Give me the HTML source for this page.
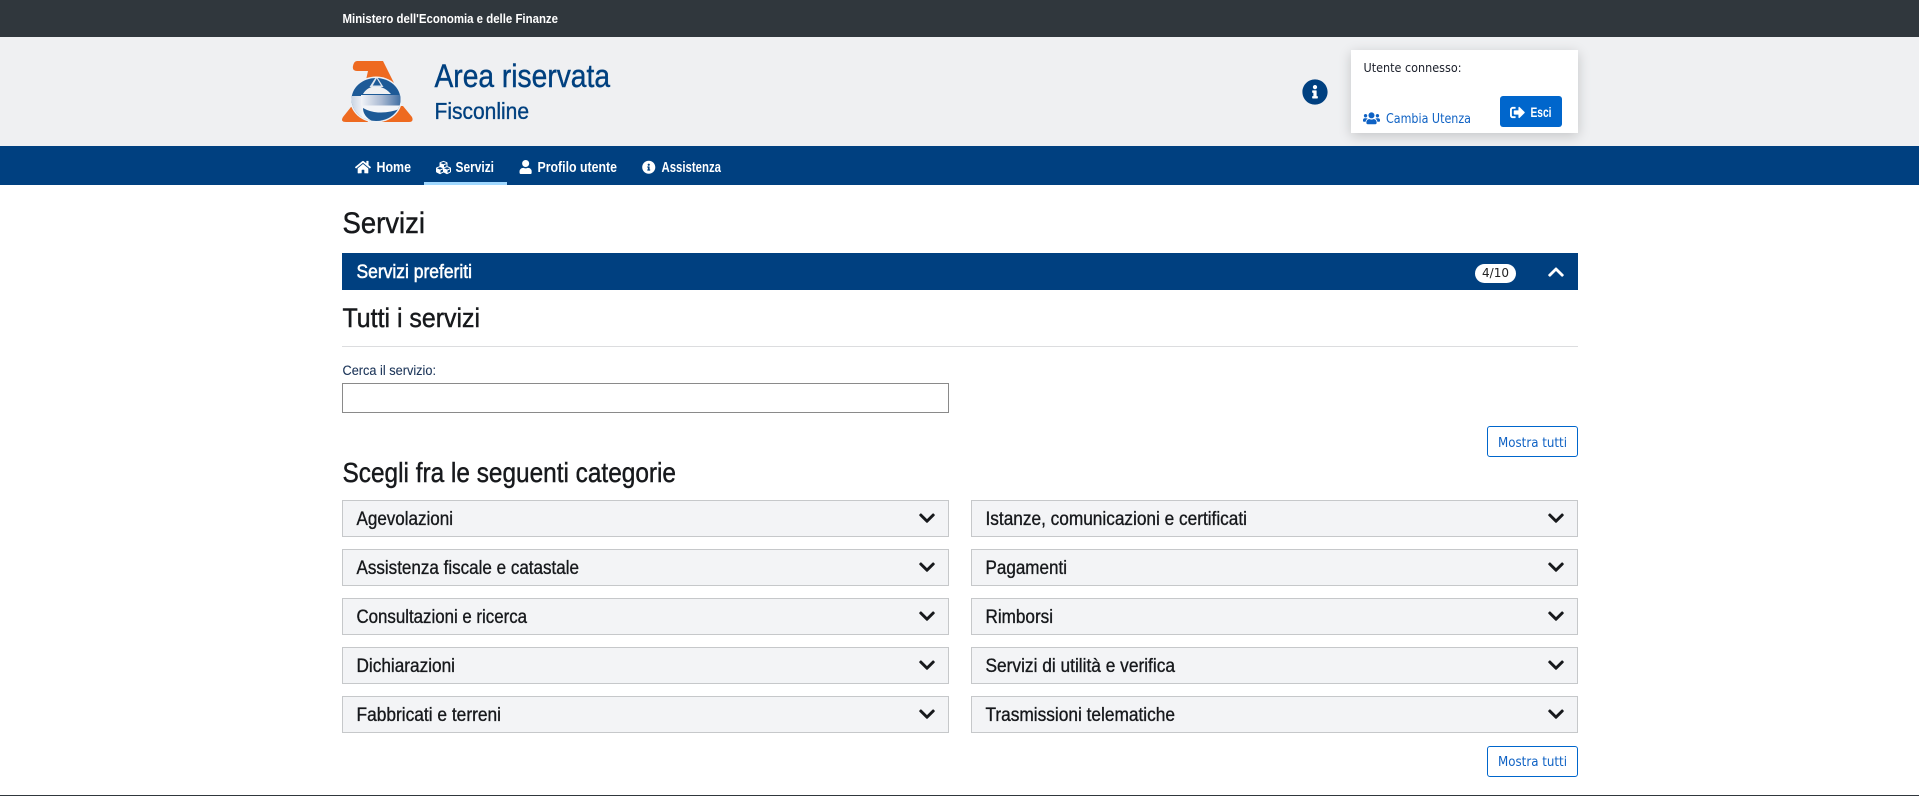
<!DOCTYPE html>
<html lang="it">
<head>
<meta charset="utf-8">
<title>Area riservata - Fisconline</title>
<style>
html,body{margin:0;padding:0;width:1919px;height:796px;overflow:hidden;background:#fff;font-family:"Liberation Sans",sans-serif}
.b{position:absolute;box-sizing:border-box}
.row{height:37px;width:607px;background:#f3f4f6;border:1px solid #c6c8ca}
.btn{left:1487px;width:91px;height:31px;border:1px solid #0066cc;border-radius:3px;background:#fff}
svg#t{position:absolute;left:0;top:0}
text{font-family:"Liberation Sans",sans-serif}
.d{font-family:"DejaVu Sans",sans-serif}
.r{font-size:19px;fill:#17191c;stroke:#17191c;stroke-width:.35}
.h{fill:#17191c;stroke:#17191c;stroke-width:.45}
.n{font-size:14.5px;font-weight:bold;fill:#fff}
.m{font-size:13px;fill:#0f62c4}
</style>
</head>
<body>
<div class="b" style="left:0;top:0;width:1919px;height:37px;background:#30373d"></div>
<div class="b" style="left:0;top:37px;width:1919px;height:109px;background:#eff0f2"></div>
<div class="b" style="left:0;top:146px;width:1919px;height:39px;background:#004080"></div>
<div class="b" style="left:424px;top:182px;width:83px;height:3px;background:#a0d8ff"></div>
<div class="b" style="left:1351px;top:50px;width:227px;height:83px;background:#fff;box-shadow:0 3px 12px rgba(0,0,0,.18)"></div>
<div class="b" style="left:1500px;top:96px;width:62px;height:31px;background:#0066cc;border-radius:3px"></div>
<div class="b" style="left:342px;top:253px;width:1236px;height:37px;background:#004080"></div>
<div class="b" style="left:1475px;top:264px;width:41px;height:19px;background:#fff;border-radius:10px"></div>
<div class="b" style="left:342px;top:346px;width:1236px;height:1px;background:#dcdddf"></div>
<div class="b" style="left:342px;top:383px;width:607px;height:30px;border:1px solid #8a8a8a;background:#fff"></div>
<div class="b btn" style="top:426px"></div>
<div class="b row" style="left:342px;top:500px"></div>
<div class="b row" style="left:342px;top:549px"></div>
<div class="b row" style="left:342px;top:598px"></div>
<div class="b row" style="left:342px;top:647px"></div>
<div class="b row" style="left:342px;top:696px"></div>
<div class="b row" style="left:971px;top:500px"></div>
<div class="b row" style="left:971px;top:549px"></div>
<div class="b row" style="left:971px;top:598px"></div>
<div class="b row" style="left:971px;top:647px"></div>
<div class="b row" style="left:971px;top:696px"></div>
<div class="b btn" style="top:746px"></div>
<div class="b" style="left:0;top:795px;width:1919px;height:1px;background:#30373d"></div>

<svg id="t" width="1919" height="796" viewBox="0 0 1919 796" xmlns="http://www.w3.org/2000/svg">
<defs>
<linearGradient id="eg" x1="0" x2="1" y1="0" y2="0"><stop offset="0" stop-color="#f2f4f8"/><stop offset=".5" stop-color="#a9b9d2"/><stop offset="1" stop-color="#3a6aa0"/></linearGradient>
<linearGradient id="lg" x1="0" x2="1" y1="0" y2="0"><stop offset="0" stop-color="#c4d0e0"/><stop offset="1" stop-color="#f6f7fa"/></linearGradient>
<symbol id="chev" viewBox="0 0 448 512"><path d="M207.029 381.476L12.686 187.132c-9.373-9.373-9.373-24.569 0-33.941l22.667-22.667c9.357-9.357 24.522-9.375 33.901-.04L224 284.505l154.745-154.021c9.379-9.335 24.544-9.317 33.901.04l22.667 22.667c9.373 9.373 9.373 24.569 0 33.941L240.971 381.476c-9.373 9.372-24.569 9.372-33.942 0z"/></symbol>
<symbol id="home" viewBox="0 0 576 512"><path d="M280.37 148.26L96 300.11V464a16 16 0 0 0 16 16l112.06-.29a16 16 0 0 0 15.92-16V368a16 16 0 0 1 16-16h64a16 16 0 0 1 16 16v95.64a16 16 0 0 0 16 16.05L464 480a16 16 0 0 0 16-16V300L295.67 148.26a12.19 12.19 0 0 0-15.3 0zM571.6 251.47L488 182.56V44.05a12 12 0 0 0-12-12h-56a12 12 0 0 0-12 12v72.61L318.47 43a48 48 0 0 0-61 0L4.34 251.47a12 12 0 0 0-1.6 16.9l25.5 31A12 12 0 0 0 45.15 301l235.22-193.74a12.19 12.19 0 0 1 15.3 0L530.9 301a12 12 0 0 0 16.9-1.6l25.5-31a12 12 0 0 0-1.7-16.93z"/></symbol>
<symbol id="cubes" viewBox="0 0 512 512"><path d="M488.6 250.2L392 214V105.5c0-15-9.3-28.4-23.4-33.7l-100-37.5c-8.1-3.1-17.1-3.1-25.3 0l-100 37.5c-14.1 5.3-23.4 18.7-23.4 33.7V214l-96.6 36.2C9.3 255.5 0 268.9 0 283.9V394c0 13.6 7.7 26.1 19.9 32.2l100 50c10.1 5.1 22.1 5.1 32.2 0l103.9-52 103.9 52c10.1 5.1 22.1 5.1 32.2 0l100-50c12.2-6.1 19.9-18.6 19.9-32.2V283.9c0-15-9.3-28.4-23.4-33.7zM358 214.8l-85 31.9v-68.2l85-37v73.3zM154 104.1l102-38.2 102 38.2v.6l-102 41.4-102-41.4v-.6zm84 291.1l-85 42.5v-79.1l85-38.8v75.4zm0-112l-102 41.4-102-41.4v-.6l102-38.2 102 38.2v.6zm240 112l-85 42.5v-79.1l85-38.8v75.4zm0-112l-102 41.4-102-41.4v-.6l102-38.2 102 38.2v.6z"/></symbol>
<symbol id="user" viewBox="0 0 448 512"><path d="M224 256c70.7 0 128-57.3 128-128S294.7 0 224 0 96 57.3 96 128s57.3 128 128 128zm89.6 32h-16.7c-22.2 10.2-46.9 16-72.9 16s-50.6-5.8-72.9-16h-16.7C60.2 288 0 348.2 0 422.4V464c0 26.5 21.5 48 48 48h352c26.5 0 48-21.5 48-48v-41.6c0-74.2-60.2-134.4-134.4-134.4z"/></symbol>
<symbol id="info" viewBox="0 0 512 512"><path d="M256 8C119.043 8 8 119.083 8 256c0 136.997 111.043 248 248 248s248-111.003 248-248C504 119.083 392.957 8 256 8zm0 110c23.196 0 42 18.804 42 42s-18.804 42-42 42-42-18.804-42-42 18.804-42 42-42zm56 254c0 6.627-5.373 12-12 12h-88c-6.627 0-12-5.373-12-12v-24c0-6.627 5.373-12 12-12h12v-64h-12c-6.627 0-12-5.373-12-12v-24c0-6.627 5.373-12 12-12h64c6.627 0 12 5.373 12 12v100h12c6.627 0 12 5.373 12 12v24z"/></symbol>
<symbol id="users" viewBox="0 0 640 512"><path d="M96 224c35.3 0 64-28.7 64-64s-28.7-64-64-64-64 28.7-64 64 28.7 64 64 64zm448 0c35.3 0 64-28.7 64-64s-28.7-64-64-64-64 28.7-64 64 28.7 64 64 64zm32 32h-64c-17.6 0-33.5 7.1-45.1 18.6 40.3 22.1 68.9 62 75.1 109.4h66c17.7 0 32-14.3 32-32v-32c0-35.3-28.7-64-64-64zm-256 0c61.9 0 112-50.1 112-112S381.9 32 320 32 208 82.1 208 144s50.1 112 112 112zm76.8 32h-8.3c-20.8 10-43.9 16-68.5 16s-47.6-6-68.5-16h-8.3C179.6 288 128 339.6 128 403.2V432c0 26.5 21.5 48 48 48h288c26.5 0 48-21.5 48-48v-28.8c0-63.6-51.6-115.2-115.2-115.2zm-223.7-13.4C161.5 263.1 145.6 256 128 256H64c-35.3 0-64 28.7-64 64v32c0 17.7 14.3 32 32 32h65.9c6.3-47.4 34.9-87.3 75.2-109.4z"/></symbol>
<symbol id="out" viewBox="0 0 512 512"><path d="M497 273L329 441c-15 15-41 4.5-41-17v-96H152c-13.3 0-24-10.7-24-24v-96c0-13.3 10.7-24 24-24h136V88c0-21.4 25.9-32 41-17l168 168c9.3 9.4 9.3 24.6 0 34zM192 436v-40c0-6.6-5.4-12-12-12H96c-17.7 0-32-14.3-32-32V160c0-17.7 14.3-32 32-32h84c6.6 0 12-5.4 12-12V76c0-6.6-5.4-12-12-12H96c-53 0-96 43-96 96v192c0 53 43 96 96 96h84c6.6 0 12-5.4 12-12z"/></symbol>
<clipPath id="c"><ellipse cx="376" cy="99.5" rx="24.5" ry="21.5"/></clipPath>
</defs>

<text x="342.5" y="23" font-size="12.5" font-weight="bold" fill="#fff" textLength="215.5" lengthAdjust="spacingAndGlyphs">Ministero dell'Economia e delle Finanze</text>

<!-- logo -->
<g fill="#ee6a20">
<path d="M357 61H383L394 83L366 80L368 71H357Q352 71 353 66Q354 61 357 61Z"/>
<path d="M351 107H362L368 122H346Q340 122 343 117Z"/>
<path d="M391 106H403L412 117Q414 122 409 122H380Z"/>
</g>
<ellipse cx="376" cy="99.5" rx="26" ry="23" fill="#eef1f5"/>
<g clip-path="url(#c)">
<rect x="350" y="76" width="52" height="46" fill="#1d5a97"/>
<rect x="350" y="96" width="14" height="28" fill="url(#lg)"/>
<rect x="362" y="105" width="40" height="18" fill="#f2f4f8"/>
<path fill="#eff0f2" d="M363 94Q367 87 376 86Q385 87 391 94Z"/>
<path fill="#dfe6ef" d="M376.5 76L369.5 87H383.5Z"/>
<path fill="#1d5a97" d="M376.7 78.5L372.8 85.5H381Z"/>
<rect x="361" y="95" width="41" height="10.5" fill="url(#eg)"/>
<path fill="#1d5a97" d="M363 108Q370 112 378 112.5Q390 113 402 108V118Q385 124 372 121Q363 116 363 108Z"/>
</g>

<text x="434.5" y="87" font-size="32" fill="#00407f" stroke="#00407f" stroke-width=".4" textLength="175.5" lengthAdjust="spacingAndGlyphs">Area riservata</text>
<text x="434.5" y="119" font-size="23" fill="#00407f" stroke="#00407f" stroke-width=".35" textLength="94.5" lengthAdjust="spacingAndGlyphs">Fisconline</text>

<circle cx="1315" cy="92" r="9" fill="#fff"/>
<use href="#info" x="1302" y="79" width="26" height="26" fill="#004080"/>

<text class="d" x="1363.5" y="72" font-size="12.5" fill="#1b1f2a" textLength="98" lengthAdjust="spacingAndGlyphs">Utente connesso:</text>
<use href="#users" x="1363" y="111.5" width="17" height="13.6" fill="#0f62c4"/>
<text class="d m" x="1386" y="123" textLength="85" lengthAdjust="spacingAndGlyphs">Cambia Utenza</text>
<use href="#out" x="1510" y="105" width="15" height="15" fill="#fff"/>
<text x="1530.5" y="117" font-size="14" font-weight="bold" fill="#fff" textLength="21" lengthAdjust="spacingAndGlyphs">Esci</text>

<use href="#home" x="355" y="160" width="16" height="14.2" fill="#fff"/>
<text class="n" x="376.5" y="172" textLength="34.5" lengthAdjust="spacingAndGlyphs">Home</text>
<use href="#cubes" x="436" y="160" width="15" height="15" fill="#fff"/>
<text class="n" x="455.5" y="172" textLength="38.5" lengthAdjust="spacingAndGlyphs">Servizi</text>
<use href="#user" x="519.5" y="160" width="12.3" height="14" fill="#fff"/>
<text class="n" x="537.5" y="172" textLength="79.5" lengthAdjust="spacingAndGlyphs">Profilo utente</text>
<use href="#info" x="642" y="160.5" width="13.5" height="13.5" fill="#fff"/>
<text class="n" x="661.5" y="172" textLength="59.5" lengthAdjust="spacingAndGlyphs">Assistenza</text>

<text class="h" x="342.5" y="233" font-size="30" textLength="82.5" lengthAdjust="spacingAndGlyphs">Servizi</text>
<text x="356.5" y="278" font-size="19" fill="#fff" stroke="#fff" stroke-width=".5" textLength="115.5" lengthAdjust="spacingAndGlyphs">Servizi preferiti</text>
<text class="d" x="1482" y="277" font-size="12.5" fill="#222" textLength="27" lengthAdjust="spacingAndGlyphs">4/10</text>
<g transform="translate(1548 281.2) scale(1 -1)"><use href="#chev" width="16" height="18.3" fill="#fff"/></g>

<text class="h" x="342.5" y="327" font-size="26.5" textLength="137.5" lengthAdjust="spacingAndGlyphs">Tutti i servizi</text>
<text x="342.5" y="375" font-size="13.5" fill="#1c3559" stroke="#1c3559" stroke-width=".1" textLength="93.5" lengthAdjust="spacingAndGlyphs">Cerca il servizio:</text>
<text class="d m" x="1498" y="447" textLength="69" lengthAdjust="spacingAndGlyphs">Mostra tutti</text>
<text class="h" x="342.5" y="482" font-size="28" textLength="333.5" lengthAdjust="spacingAndGlyphs">Scegli fra le seguenti categorie</text>

<text class="r" x="356.5" y="525" textLength="96.5" lengthAdjust="spacingAndGlyphs">Agevolazioni</text>
<text class="r" x="356.5" y="574" textLength="222.5" lengthAdjust="spacingAndGlyphs">Assistenza fiscale e catastale</text>
<text class="r" x="356.5" y="623" textLength="170.5" lengthAdjust="spacingAndGlyphs">Consultazioni e ricerca</text>
<text class="r" x="356.5" y="672" textLength="98.5" lengthAdjust="spacingAndGlyphs">Dichiarazioni</text>
<text class="r" x="356.5" y="721" textLength="144.5" lengthAdjust="spacingAndGlyphs">Fabbricati e terreni</text>
<text class="r" x="985.5" y="525" textLength="261.5" lengthAdjust="spacingAndGlyphs">Istanze, comunicazioni e certificati</text>
<text class="r" x="985.5" y="574" textLength="81.5" lengthAdjust="spacingAndGlyphs">Pagamenti</text>
<text class="r" x="985.5" y="623" textLength="67.5" lengthAdjust="spacingAndGlyphs">Rimborsi</text>
<text class="r" x="985.5" y="672" textLength="189.5" lengthAdjust="spacingAndGlyphs">Servizi di utilità e verifica</text>
<text class="r" x="985.5" y="721" textLength="189.5" lengthAdjust="spacingAndGlyphs">Trasmissioni telematiche</text>

<g fill="#17191c">
<use href="#chev" x="919" y="509" width="16" height="18.3"/>
<use href="#chev" x="919" y="558" width="16" height="18.3"/>
<use href="#chev" x="919" y="607" width="16" height="18.3"/>
<use href="#chev" x="919" y="656" width="16" height="18.3"/>
<use href="#chev" x="919" y="705" width="16" height="18.3"/>
<use href="#chev" x="1548" y="509" width="16" height="18.3"/>
<use href="#chev" x="1548" y="558" width="16" height="18.3"/>
<use href="#chev" x="1548" y="607" width="16" height="18.3"/>
<use href="#chev" x="1548" y="656" width="16" height="18.3"/>
<use href="#chev" x="1548" y="705" width="16" height="18.3"/>
</g>
<text class="d m" x="1498" y="766" textLength="69" lengthAdjust="spacingAndGlyphs">Mostra tutti</text>
</svg>
</body>
</html>
